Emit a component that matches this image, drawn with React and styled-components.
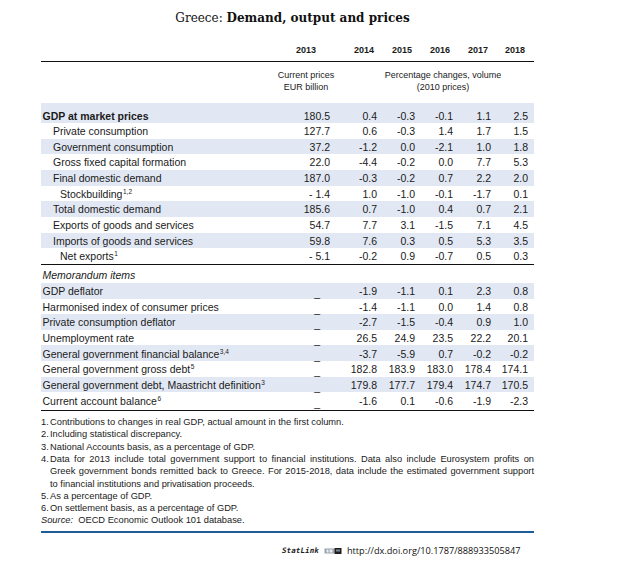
import React from "react";
import styled, { createGlobalStyle } from "styled-components";

const GlobalStyle = createGlobalStyle`
  html, body {
    margin: 0;
    padding: 0;
    background: #ffffff;
  }
  body {
    font-family: "Liberation Sans", Arial, sans-serif;
    color: #1a1a1a;
  }
`;

const YEARS = ["2013", "2014", "2015", "2016", "2017", "2018"];

const MAIN_ROWS = [
  { label: "GDP at market prices", level: 0, bold: true, values: ["180.5", "0.4", "-0.3", "-0.1", "1.1", "2.5"] },
  { label: "Private consumption", level: 1, values: ["127.7", "0.6", "-0.3", "1.4", "1.7", "1.5"] },
  { label: "Government consumption", level: 1, values: ["37.2", "-1.2", "0.0", "-2.1", "1.0", "1.8"] },
  { label: "Gross fixed capital formation", level: 1, values: ["22.0", "-4.4", "-0.2", "0.0", "7.7", "5.3"] },
  { label: "Final domestic demand", level: 1, values: ["187.0", "-0.3", "-0.2", "0.7", "2.2", "2.0"] },
  { label: "Stockbuilding", sup: "1,2", level: 2, values: ["- 1.4", "1.0", "-1.0", "-0.1", "-1.7", "0.1"] },
  { label: "Total domestic demand", level: 1, values: ["185.6", "0.7", "-1.0", "0.4", "0.7", "2.1"] },
  { label: "Exports of goods and services", level: 1, values: ["54.7", "7.7", "3.1", "-1.5", "7.1", "4.5"] },
  { label: "Imports of goods and services", level: 1, values: ["59.8", "7.6", "0.3", "0.5", "5.3", "3.5"] },
  { label: "Net exports", sup: "1", level: 2, values: ["- 5.1", "-0.2", "0.9", "-0.7", "0.5", "0.3"] },
];

const MEMO_ROWS = [
  { label: "GDP deflator", values: ["-1.9", "-1.1", "0.1", "2.3", "0.8"] },
  { label: "Harmonised index of consumer prices", values: ["-1.4", "-1.1", "0.0", "1.4", "0.8"] },
  { label: "Private consumption deflator", values: ["-2.7", "-1.5", "-0.4", "0.9", "1.0"] },
  { label: "Unemployment rate", values: ["26.5", "24.9", "23.5", "22.2", "20.1"] },
  { label: "General government financial balance", sup: "3,4", values: ["-3.7", "-5.9", "0.7", "-0.2", "-0.2"] },
  { label: "General government gross debt", sup: "5", values: ["182.8", "183.9", "183.0", "178.4", "174.1"] },
  { label: "General government debt, Maastricht definition", sup: "3", values: ["179.8", "177.7", "179.4", "174.7", "170.5"] },
  { label: "Current account balance", sup: "6", values: ["-1.6", "0.1", "-0.6", "-1.9", "-2.3"] },
];

const NOTES = [
  { n: "1.", lines: ["Contributions to changes in real GDP, actual amount in the first column."] },
  { n: "2.", lines: ["Including statistical discrepancy."] },
  { n: "3.", lines: ["National Accounts basis, as a percentage of GDP."] },
  {
    n: "4.",
    lines: [
      "Data for 2013 include total government support to financial institutions. Data also include Eurosystem profits on",
      "Greek government bonds remitted back to Greece. For 2015-2018, data include the estimated government support",
      "to financial institutions and privatisation proceeds.",
    ],
    justify: 2,
  },
  { n: "5.", lines: ["As a percentage of GDP."] },
  { n: "6.", lines: ["On settlement basis, as a percentage of GDP."] },
];

const COLS = "241px 48px 47px 38px 38px 38px 37px";

const Page = styled.div`
  width: 644px;
  height: 561px;
  padding: 10px 0 0 41px;
  box-sizing: border-box;
  overflow: hidden;
`;

const Title = styled.div`
  width: 493px;
  padding-left: 10px;
  box-sizing: border-box;
  text-align: center;
  font-family: "DejaVu Serif", "Liberation Serif", serif;
  font-size: 12px;
  line-height: 16px;
  color: #111;
  margin-bottom: 17px;
  b {
    font-weight: 700;
  }
`;

const Table = styled.div`
  width: 493px;
  display: flex;
  flex-direction: column;
`;

const HeadRow = styled.div`
  display: grid;
  grid-template-columns: ${COLS};
  padding: 0 6px 4px 0;
  border-bottom: 1px solid #111;
  font-size: 9px;
  font-weight: 700;
  line-height: 14px;
`;

const YearCell = styled.div`
  text-align: ${(p) => (p.$center ? "center" : "right")};
  padding-right: ${(p) => (p.$center ? "0" : "3px")};
`;

const SubHead = styled.div`
  display: grid;
  grid-template-columns: ${COLS};
  padding: 7px 6px 10px 0;
  font-size: 9px;
  line-height: 12px;
  color: #222;
`;

const SubCell = styled.div`
  grid-column: ${(p) => p.$col};
  text-align: center;
  white-space: nowrap;
  padding-left: ${(p) => p.$pl || 0}px;
  margin: 0 ${(p) => p.$mx || 0}px;
`;

const Section = styled.div`
  display: flex;
  flex-direction: column;
  border-bottom: 1px solid #111;
  padding-bottom: ${(p) => p.$pb || 0}px;
`;

const Row = styled.div`
  display: grid;
  grid-template-columns: ${COLS};
  padding-right: 6px;
  height: ${(p) => p.$h || 15.65}px;
  box-sizing: border-box;
  align-items: end;
  background: ${(p) => (p.$shade ? "#e2e8f3" : "transparent")};
  font-size: 10.5px;
  line-height: 14.5px;
`;

const Label = styled.div`
  padding-left: ${(p) => [1.5, 12, 19][p.$level || 0]}px;
  font-weight: ${(p) => (p.$bold ? 700 : 400)};
  font-style: ${(p) => (p.$italic ? "italic" : "normal")};
  white-space: nowrap;
  sup {
    font-size: 6.5px;
    line-height: 0;
    vertical-align: 4px;
    margin-left: 0.5px;
  }
`;

const Val = styled.div`
  text-align: right;
  white-space: nowrap;
`;

const Dash = styled.div`
  text-align: right;
  padding-right: 10px;
  transform: translateY(2px);
`;

const Notes = styled.div`
  width: 493px;
  padding: 5px 0 4px;
  border-bottom: 2px solid #1c5d99;
  font-size: 9.3px;
  line-height: 12.3px;
  color: #1a1a1a;
`;

const Note = styled.div`
  display: grid;
  grid-template-columns: 9px 1fr;
`;

const NoteLine = styled.div`
  text-align: ${(p) => (p.$justify ? "justify" : "left")};
  text-align-last: ${(p) => (p.$justify ? "justify" : "auto")};
  white-space: nowrap;
`;

const Source = styled.div`
  i {
    font-style: italic;
  }
`;

const StatLinkBar = styled.div`
  display: flex;
  align-items: center;
  gap: 5px;
  margin: 12px 0 0 241px;
  height: 12px;
`;

const StatWord = styled.span`
  font-family: "DejaVu Sans Mono", "Liberation Mono", monospace;
  font-style: italic;
  font-weight: 700;
  font-size: 7.5px;
  color: #222;
  letter-spacing: 0.1px;
`;

const Url = styled.span`
  font-family: "Open Sans", "Liberation Sans", sans-serif;
  font-size: 9.2px;
  color: #111;
`;

const StatIcon = () => (
  <svg width="18" height="6" viewBox="0 0 17 6">
    <rect x="0" y="0.5" width="10" height="5" fill="#9aa3ad" />
    <rect x="2" y="1.5" width="2" height="3" fill="#e8ecf0" />
    <rect x="5" y="1.5" width="3" height="3" fill="#e8ecf0" />
    <rect x="10" y="0" width="7" height="6" fill="#1e1e1e" />
    <rect x="11.5" y="1.5" width="4" height="2" fill="#7d8792" />
  </svg>
);

export default function App() {
  return (
    <>
      <GlobalStyle />
      <Page>
        <Title>
          Greece: <b>Demand, output and prices</b>
        </Title>
        <Table>
          <HeadRow>
            <div />
            {YEARS.map((y, i) => (
              <YearCell key={y} $center={i === 0}>
                {y}
              </YearCell>
            ))}
          </HeadRow>
          <SubHead>
            <SubCell $col="2 / 3" $mx={-10}>
              Current prices
              <br />
              EUR billion
            </SubCell>
            <SubCell $col="3 / 8" $pl={28}>
              Percentage changes, volume
              <br />
              (2010 prices)
            </SubCell>
          </SubHead>
          <Section>
            {MAIN_ROWS.map((r, i) => (
              <Row key={r.label} $shade={i % 2 === 0} $h={i === 0 ? 20 : 15.67}>
                <Label $level={r.level} $bold={r.bold}>
                  {r.label}
                  {r.sup && <sup>{r.sup}</sup>}
                </Label>
                {r.values.map((v, j) => (
                  <Val key={j}>{v}</Val>
                ))}
              </Row>
            ))}
          </Section>
          <Section $pb={2}>
            <Row $h={18}>
              <Label $italic>Memorandum items</Label>
            </Row>
            {MEMO_ROWS.map((r, i) => (
              <Row key={r.label} $shade={i % 2 === 0}>
                <Label>
                  {r.label}
                  {r.sup && <sup>{r.sup}</sup>}
                </Label>
                <Dash>_</Dash>
                {r.values.map((v, j) => (
                  <Val key={j}>{v}</Val>
                ))}
              </Row>
            ))}
          </Section>
        </Table>
        <Notes>
          {NOTES.map((n) => (
            <Note key={n.n}>
              <span>{n.n}</span>
              <div>
                {n.lines.map((l, k) => (
                  <NoteLine key={k} $justify={n.justify && k < n.justify}>
                    {l}
                  </NoteLine>
                ))}
              </div>
            </Note>
          ))}
          <Source>
            <i>Source:</i>&nbsp; OECD Economic Outlook 101 database.
          </Source>
        </Notes>
        <StatLinkBar>
          <StatWord>StatLink</StatWord>
          <StatIcon />
          <Url>http://dx.doi.org/10.1787/888933505847</Url>
        </StatLinkBar>
      </Page>
    </>
  );
}
